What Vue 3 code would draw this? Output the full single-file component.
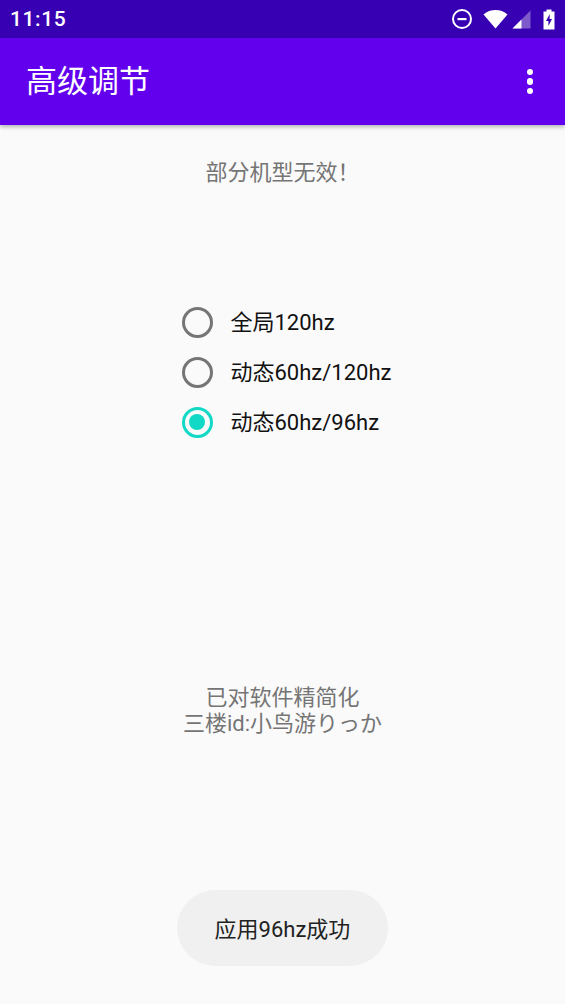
<script setup>
const options = [
  { label: '全局120hz', checked: false },
  { label: '动态60hz/120hz', checked: false },
  { label: '动态60hz/96hz', checked: true }
]
</script>

<template>
  <div class="screen">
    <div class="status">
      <span class="time">11:15</span>
      <div class="status-icons">
        <svg class="dnd" width="22" height="22" viewBox="0 0 22 22">
          <circle cx="11" cy="11" r="9" fill="none" stroke="#fff" stroke-width="2" />
          <rect x="6.5" y="10" width="9" height="2.2" fill="#fff" />
        </svg>
        <svg class="wifi" width="25" height="20" viewBox="0 0 25 20">
          <path d="M0.5 5.5C4 2.4 8 1 12.5 1S21 2.4 24.5 5.5L12.5 19.5Z" fill="#fff" />
        </svg>
        <svg class="signal" width="19" height="19" viewBox="0 0 19 19">
          <path d="M18.5 0.5V18.5H0.5Z" fill="#7f5acb" />
          <path d="M9.5 9.5V18.5H0.5Z" fill="#fff" />
        </svg>
        <svg class="battery" width="12" height="21" viewBox="0 0 12 21">
          <path d="M3.5 0.5H8.5V2.5H11.5V20.5H0.5V2.5H3.5Z" fill="#fff" />
          <path d="M6.8 5L3 12H5.4V17L9 10H6.6Z" fill="#3700b3" />
        </svg>
      </div>
    </div>
    <header class="bar">
      <h1 class="title">高级调节</h1>
      <div class="menu"><i></i><i></i><i></i></div>
    </header>
    <main class="body">
      <p class="hint">部分机型无效&#xFF01;</p>
      <div class="radios">
        <div v-for="o in options" :key="o.label" class="radio">
          <span class="ring" :class="{ on: o.checked }"><span v-if="o.checked" class="dot"></span></span>
          <span class="label">{{ o.label }}</span>
        </div>
      </div>
      <p class="note">已对软件精简化<br />三楼id:小鸟游りっか</p>
      <div class="toast">应用96hz成功</div>
    </main>
  </div>
</template>

<style>
html, body { margin: 0; background: #fafafa; }
</style>

<style scoped>
.screen {
  width: 565px;
  height: 1004px;
  overflow: hidden;
  display: flex;
  flex-direction: column;
  background: #fafafa;
  font-family: "Roboto", "Noto Sans CJK SC", sans-serif;
}
.status {
  height: 38px;
  flex: none;
  background: #3700b3;
  display: flex;
  align-items: center;
  justify-content: space-between;
  padding: 0 10px 0 10px;
  color: #fff;
}
.time { font-size: 21px; font-weight: 500; letter-spacing: 0.6px; }
.status-icons { display: flex; align-items: center; }
.dnd { margin-right: 10px; }
.wifi { margin-right: 4px; }
.signal { margin-right: 12px; }
.bar {
  height: 87px;
  flex: none;
  background: #6200ee;
  display: flex;
  align-items: center;
  justify-content: space-between;
  padding: 0 32px 0 26px;
  box-shadow: 0 2px 4px rgba(0, 0, 0, 0.28);
  position: relative;
}
.title { margin: 0; font-size: 31px; font-weight: 400; color: #fff; line-height: 1; }
.menu { display: flex; flex-direction: column; gap: 3px; }
.menu i { width: 6.4px; height: 6.4px; border-radius: 50%; background: #fff; display: block; }
.body {
  flex: 1;
  display: flex;
  flex-direction: column;
  align-items: center;
}
.hint {
  margin: 32px 0 0;
  font-size: 22px;
  line-height: 32px;
  color: #757575;
}
.radios {
  margin-top: 108px;
  margin-left: 8px;
  display: flex;
  flex-direction: column;
  align-self: center;
  width: 210px;
}
.radio { height: 50px; display: flex; align-items: center; }
.ring {
  width: 31px;
  height: 31px;
  box-sizing: border-box;
  border: 3.5px solid #757575;
  border-radius: 50%;
  display: flex;
  align-items: center;
  justify-content: center;
  flex: none;
}
.ring.on { border-color: #12d8c6; }
.dot { width: 16px; height: 16px; border-radius: 50%; background: #12d8c6; }
.label { margin: 2px 0 0 18px; font-size: 22px; line-height: 26px; color: #111; white-space: nowrap; }
.note {
  margin: 238px 0 0;
  font-size: 22px;
  line-height: 26px;
  color: #757575;
  text-align: center;
}
.toast {
  margin-top: 153px;
  width: 211px;
  height: 76px;
  box-sizing: border-box;
  padding-bottom: 3px;
  border-radius: 38px;
  background: #f0f0f0;
  display: flex;
  align-items: center;
  justify-content: center;
  font-size: 22px;
  color: #222;
}
</style>
